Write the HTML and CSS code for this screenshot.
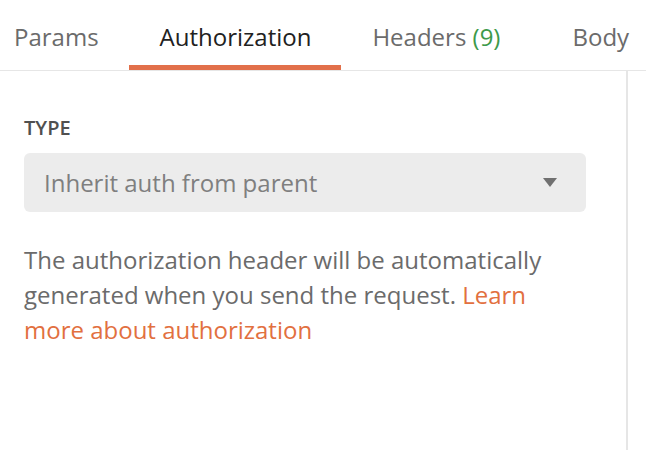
FILE: index.html
```html
<!DOCTYPE html>
<html>
<head>
<meta charset="utf-8">
<link rel="stylesheet" href="styles.css">
</head>
<body>
<div class="page">
  <div class="tabs">
    <div class="tab">Params</div>
    <div class="tab active">Authorization</div>
    <div class="tab tab-headers">Headers <span class="count">(9)</span></div>
    <div class="tab">Body</div>
  </div>
  <div class="main">
    <div class="pane">
      <div class="label">TYPE</div>
      <div class="select">
        <span class="select-text">Inherit auth from parent</span>
        <svg class="caret" width="14" height="9" viewBox="0 0 14 9"><path d="M0 0 H14 L7 9 Z" fill="#707070"/></svg>
      </div>
      <p class="desc">The authorization header will be automatically generated when you send the request. <a class="link" href="#">Learn more about authorization</a></p>
    </div>
    <div class="side"></div>
  </div>
</div>
</body>
</html>
```
FILE: styles.css
```css
* { box-sizing: border-box; }
html, body { margin: 0; padding: 0; background: #ffffff; }
body {
  font-family: "Open Sans", "Noto Sans", sans-serif;
  width: 646px;
  height: 450px;
  overflow: hidden;
}
.page { display: flex; flex-direction: column; height: 450px; }
.tabs {
  display: flex;
  height: 71px;
  border-bottom: 1px solid #e6e6e6;
  margin-left: -17px;
  white-space: nowrap;
}
.tab {
  padding: 21px 30px 0 31px;
  font-size: 24px;
  line-height: 32px;
  color: #6b6b6b;
  border-bottom: 5px solid transparent;
  height: 70px;
  flex-shrink: 0;
}
.tab.active {
  color: #212121;
  border-bottom-color: #e2704a;
}
.tab-headers { margin-right: 11px; }
.count { color: #3d9a4a; }
.main { display: flex; flex: 1; }
.pane { width: 628px; padding: 0 40px 0 24px; border-right: 2px solid #e6e6e6; }
.side { flex: 1; }
.label {
  margin-top: 44px;
  font-size: 20px;
  font-weight: 600;
  line-height: 26px;
  color: #505050;
}
.select {
  margin-top: 12px;
  width: 562px;
  height: 59px;
  background: #ececec;
  border-radius: 6px;
  display: flex;
  align-items: center;
  justify-content: space-between;
  padding: 0 29px 0 20px;
}
.select-text { font-size: 24px; color: #7f7f7f; line-height: 32px; }
.caret { display: block; }
.desc {
  margin: 30px 0 0;
  font-size: 24px;
  line-height: 35px;
  color: #6b6b6b;
}
.link { color: #e2703f; text-decoration: none; }
```
